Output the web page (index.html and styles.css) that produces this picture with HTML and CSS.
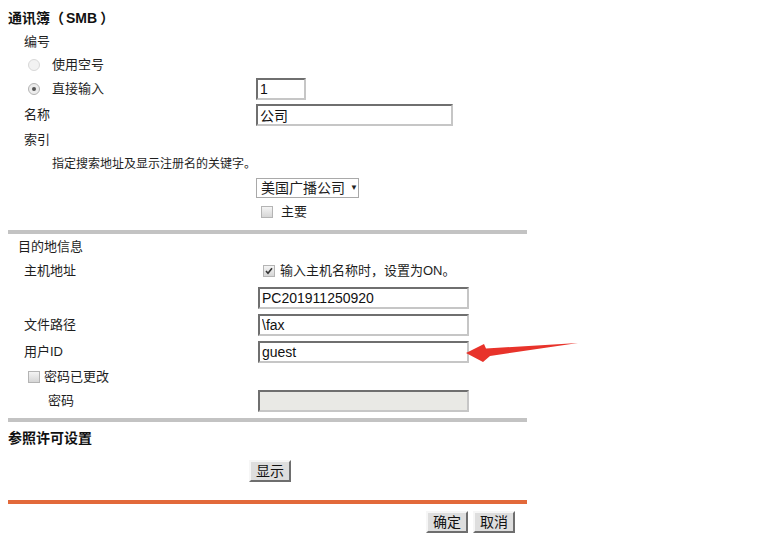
FILE: index.html
```html
<!DOCTYPE html>
<html lang="zh-CN">
<head>
<meta charset="utf-8">
<title>通讯簿（SMB）</title>
<link rel="stylesheet" href="styles.css">
</head>
<body>
<div class="page">
  <div class="row h24 title">通讯簿（<span class="smb">SMB</span>）</div>
  <div class="row h23"><span class="lab">编号</span></div>
  <div class="row h23 radio-row"><span class="radio"></span><span>使用空号</span></div>
  <div class="row h26">
    <span class="lab radio-lab"><span class="radio on"></span><span>直接输入</span></span>
    <span class="ctl"><input class="txt w50" type="text" value="1"></span>
  </div>
  <div class="row h26">
    <span class="lab">名称</span>
    <span class="ctl"><input class="txt w197" type="text" value="公司"></span>
  </div>
  <div class="row h24"><span class="lab">索引</span></div>
  <div class="row h24 desc">指定搜索地址及显示注册名的关键字。</div>
  <div class="row h24">
    <span class="lab"></span>
    <span class="ctl"><span class="select">美国广播公司<span class="caret">▼</span></span></span>
  </div>
  <div class="row h24">
    <span class="lab"></span>
    <span class="ctl chk-wrap"><span class="chk"></span><span>主要</span></span>
  </div>
  <div class="sep sep1"></div>

  <div class="row h22 sect">目的地信息</div>
  <div class="row h26">
    <span class="lab lab2">主机地址</span>
    <span class="ctl chk-wrap2"><span class="chk on"><svg viewBox="0 0 12 12" width="12" height="12"><path d="M2.4 6 L4.8 8.8 L9.6 2.8" fill="none" stroke="#333" stroke-width="1.9"/></svg></span><span>输入主机名称时，设置为ON。</span></span>
  </div>
  <div class="row h27">
    <span class="lab lab2"></span>
    <span class="ctl"><input class="txt w211" type="text" value="PC201911250920"></span>
  </div>
  <div class="row h27">
    <span class="lab lab2">文件路径</span>
    <span class="ctl"><input class="txt w211" type="text" value="\fax"></span>
  </div>
  <div class="row h27">
    <span class="lab lab2">用户ID</span>
    <span class="ctl"><input class="txt w211" type="text" value="guest"></span>
  </div>
  <div class="row h23 pw-chk"><span class="chk"></span><span>密码已更改</span></div>
  <div class="row h26">
    <span class="lab lab2 pw">密码</span>
    <span class="ctl"><input class="txt w211 dis" type="password" disabled></span>
  </div>
  <div class="sep sep2"></div>

  <div class="row h24 title sub">参照许可设置</div>
  <div class="row h30 show-row"><button class="btn" type="button">显示</button></div>
  <div class="sep orange"></div>
  <div class="row h22 foot">
    <button class="btn" type="button">确定</button>
    <button class="btn" type="button">取消</button>
  </div>

  <svg class="arrow" viewBox="0 0 124 32" width="124" height="32">
    <polygon points="0,17 18,8 20,12.5 112,7 24,20 17,26" fill="#e8332b"/>
  </svg>
</div>
</body>
</html>
```

FILE: styles.css
```css
html, body {
  margin: 0;
  padding: 0;
  background: #ffffff;
}

body {
  font-family: "Liberation Sans", "Noto Sans CJK SC", sans-serif;
  font-size: 13px;
  color: #1e1e1e;
}

.page {
  position: relative;
  margin-left: 8px;
  width: 519px;
  padding-top: 6px;
}

.row {
  display: flex;
  align-items: center;
  line-height: 16px;
  white-space: nowrap;
}

.h22 { height: 22px; }
.h23 { height: 23px; }
.h24 { height: 24px; }
.h26 { height: 26px; }
.h27 { height: 27px; }
.h30 { height: 30px; }

.title {
  font-size: 14px;
  font-weight: bold;
  color: #111;
}

.smb {
  padding: 0 3px 0 2px;
}

.lab {
  display: flex;
  align-items: center;
  box-sizing: border-box;
  width: 248px;
  padding-left: 16px;
}

.lab2 {
  width: 250px;
}

.pw {
  padding-left: 40px;
}

.radio-row {
  padding-left: 20px;
}

.radio-lab {
  padding-left: 20px;
}

.radio {
  box-sizing: border-box;
  display: inline-flex;
  align-items: center;
  justify-content: center;
  width: 12px;
  height: 12px;
  border-radius: 50%;
  border: 1px solid #d8d8d8;
  background: #f2f2f2;
  margin-right: 12px;
}

.radio.on {
  border-color: #b4b4b4;
  background: #ececec;
}

.radio.on::after {
  content: "";
  width: 4px;
  height: 4px;
  border-radius: 50%;
  background: #555;
}

.ctl {
  display: flex;
  align-items: center;
}

.txt {
  box-sizing: border-box;
  height: 22px;
  margin: 0;
  padding: 0 2px;
  border: 2px solid;
  border-color: #6f6f6f #c6c6c6 #c6c6c6 #6f6f6f;
  background: #fff;
  font-family: "Liberation Sans", "Noto Sans CJK SC", sans-serif;
  font-size: 14px;
  color: #111;
  outline: none;
}

.w50 { width: 50px; }
.w197 { width: 197px; }
.w211 { width: 211px; }

.txt.dis {
  background: #e9e9e5;
}

.desc {
  padding-left: 44px;
  font-size: 12px;
}

.select {
  box-sizing: border-box;
  display: inline-flex;
  align-items: center;
  width: 103px;
  height: 20px;
  padding-left: 4px;
  border: 1px solid #a9a9a9;
  background: #fff;
  font-size: 14px;
}

.caret {
  font-size: 8px;
  margin-left: 5px;
  color: #222;
}

.chk {
  box-sizing: border-box;
  display: inline-flex;
  align-items: center;
  justify-content: center;
  width: 12px;
  height: 12px;
  border: 1px solid #b4b4b4;
  background: linear-gradient(#f4f4f4, #d6d6d6);
}

.chk svg {
  display: block;
}

.chk-wrap {
  padding-left: 5px;
}

.chk-wrap .chk {
  margin-right: 8px;
}

.chk-wrap2 {
  padding-left: 5px;
}

.chk-wrap2 .chk {
  margin-right: 5px;
}

.pw-chk {
  padding-left: 20px;
}

.pw-chk .chk {
  margin-right: 4px;
}

.sect {
  margin-top: 2px;
  padding-left: 10px;
}

.sep {
  height: 4px;
  background: #c3c3c3;
}

.sep1 { margin-top: 6px; }
.sep2 { margin-top: 4px; }

.sub {
  margin-top: 4px;
}

.show-row {
  margin-top: 6px;
  padding-left: 241px;
}

.btn {
  box-sizing: border-box;
  height: 22px;
  margin: 0;
  padding: 0 5px;
  border: 2px solid;
  border-color: #f6f6f6 #6e6e6e #6e6e6e #f6f6f6;
  background: #dedede;
  font-family: "Liberation Sans", "Noto Sans CJK SC", sans-serif;
  font-size: 14px;
  line-height: 16px;
  color: #111;
}

.orange {
  margin-top: 14px;
  background: #e2693a;
}

.foot {
  margin-top: 7px;
  justify-content: flex-end;
  gap: 5px;
  padding-right: 12px;
}

.arrow {
  position: absolute;
  left: 458px;
  top: 336px;
}
```
